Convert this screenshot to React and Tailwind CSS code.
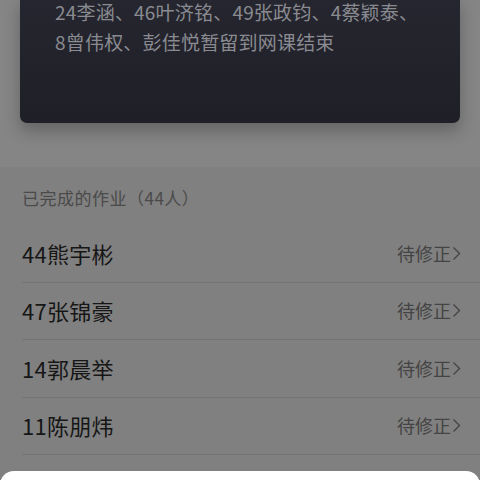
import React from 'react';

const rows = ['44熊宇彬', '47张锦豪', '14郭晨举', '11陈朋炜'];

const font = { fontFamily: '"Noto Sans CJK SC", "Noto Sans", sans-serif' };

export default function App() {
  return (
    <div className="w-[480px] h-[480px] overflow-hidden bg-[#808080] relative" style={font}>
      {/* top area with the notice card */}
      <div className="bg-[#858585] h-[170px] px-[20px]">
        <div className="h-[126px] rounded-b-[7px] bg-gradient-to-b from-[#25262f] to-[#1e1f27] shadow-[0_8px_16px_rgba(0,0,0,0.25)] pl-[35px] pr-2 text-[19px] leading-[30px] text-[#8a8b91] -mt-[3px] tracking-[0.2px]">
          <p>24李涵、46叶济铭、49张政钧、4蔡颖泰、</p>
          <p>8曾伟权、彭佳悦暂留到网课结束</p>
        </div>
      </div>

      <div className="pl-[22px]">
        <div className="h-[58px] flex items-center text-[17px] text-[#4a4a4a] pt-[3px] tracking-[0.5px]">
          已完成的作业（44人）
        </div>
        {rows.map((name) => (
          <div key={name} className="h-[57.5px] flex items-center justify-between border-b border-[#747474] pr-[19px]">
            <span className="text-[22px] text-[#161616] tracking-[0.3px]">{name}</span>
            <span className="flex items-center text-[18px] text-[#444444]">
              待修正
              <svg width="9" height="15" viewBox="0 0 9 15" className="ml-[1px]">
                <path d="M1.5 1.5 L7.5 7.5 L1.5 13.5" fill="none" stroke="#444444" strokeWidth="1.4" />
              </svg>
            </span>
          </div>
        ))}
      </div>

      <div className="absolute left-0 right-0 top-[471px] h-[40px] bg-white rounded-t-[14px]" />
    </div>
  );
}
